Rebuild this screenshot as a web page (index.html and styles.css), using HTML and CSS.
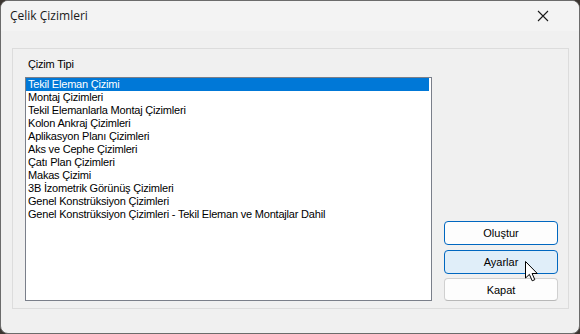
FILE: index.html
```html
<!DOCTYPE html>
<html lang="tr">

<head>
    <meta charset="UTF-8">
    <title>Çelik Çizimleri</title>
    <link rel="stylesheet" href="styles.css">
</head>

<body>
    <div class="window">
        <div class="titlebar">
            <span class="title">Çelik Çizimleri</span>
            <svg class="close" width="12" height="12" viewBox="0 0 12 12">
                <path d="M1 1 L11 11 M11 1 L1 11" stroke="#1a1a1a" stroke-width="1.1" fill="none" />
            </svg>
        </div>
        <div class="content">
            <div class="group">
                <div class="group-label">Çizim Tipi</div>
                <div class="group-row">
                    <ul class="listbox">
                        <li class="selected">Tekil Eleman Çizimi</li>
                        <li>Montaj Çizimleri</li>
                        <li>Tekil Elemanlarla Montaj Çizimleri</li>
                        <li>Kolon Ankraj Çizimleri</li>
                        <li>Aplikasyon Planı Çizimleri</li>
                        <li>Aks ve Cephe Çizimleri</li>
                        <li>Çatı Plan Çizimleri</li>
                        <li>Makas Çizimi</li>
                        <li>3B İzometrik Görünüş Çizimleri</li>
                        <li>Genel Konstrüksiyon Çizimleri</li>
                        <li>Genel Konstrüksiyon Çizimleri - Tekil Eleman ve Montajlar Dahil</li>
                    </ul>
                    <div class="buttons">
                        <button class="btn btn-default">Oluştur</button>
                        <button class="btn btn-hover">Ayarlar</button>
                        <button class="btn btn-plain">Kapat</button>
                    </div>
                </div>
            </div>
        </div>
        <!-- mouse pointer over Ayarlar -->
        <svg class="cursor" width="14" height="21" viewBox="0 0 14 21">
            <path d="M0.5 0.5 L0.5 17 L4.4 13.4 L7.2 19.8 L9.8 18.7 L7.1 12.5 L12.3 12.5 Z" fill="#fff" stroke="#000" stroke-width="1" stroke-linejoin="round" />
        </svg>
    </div>
</body>

</html>
```

FILE: styles.css
```css
html,
body {
    margin: 0;
    padding: 0;
    background-color: #3b3530;
}

.window {
    position: relative;
    width: 578px;
    height: 332px;
    border: 1px solid #6b6b6b;
    border-radius: 8px;
    background-color: #f0f0f0;
    overflow: hidden;
    display: flex;
    flex-direction: column;
    font-family: "Liberation Sans", Arial, sans-serif;
    font-size: 11px;
    letter-spacing: -0.2px;
    color: #000;
}

.titlebar {
    height: 30px;
    background-color: #f3f3f3;
    display: flex;
    align-items: center;
    justify-content: space-between;
    padding: 0 30px 0 9px;
}

.title {
    font-family: "Open Sans", "Noto Sans", sans-serif;
    font-size: 12px;
    letter-spacing: 0;
    color: #1a1a1a;
    margin-top: -1px;
}

.close {
    display: block;
}

.content {
    flex: 1;
    padding: 17px 10px 24px 11px;
    display: flex;
}

.group {
    flex: 1;
    border: 1px solid #dcdcdc;
    padding: 9px 10px 7px 12px;
    display: flex;
    flex-direction: column;
}

.group-label {
    height: 13px;
    line-height: 13px;
    padding-left: 3px;
    margin-bottom: 6px;
}

.group-row {
    flex: 1;
    display: flex;
    gap: 12px;
}

.listbox {
    list-style: none;
    margin: 0;
    padding: 0 2px 0 0;
    width: 403px;
    background-color: #fff;
    border: 1px solid #7a7f8a;
}

.listbox li {
    height: 13px;
    line-height: 13px;
    padding-left: 2px;
    white-space: nowrap;
}

.listbox li.selected {
    background-color: #0078d7;
    color: #fff;
}

.buttons {
    flex: 1;
    display: flex;
    flex-direction: column;
    justify-content: flex-end;
}

.btn {
    font-family: "Liberation Sans", Arial, sans-serif;
    font-size: 11px;
    letter-spacing: 0;
    color: #000;
    height: 24px;
    border-radius: 4px;
    padding: 0;
    margin: 0;
}

.btn-default {
    background-color: #fdfdfd;
    border: 1px solid #0067c0;
    margin-bottom: 5px;
}

.btn-hover {
    background-color: #e0eef9;
    border: 1px solid #0067c0;
    margin-bottom: 4px;
}

.btn-plain {
    height: 23px;
    background-color: #fdfdfd;
    border: 1px solid #d0d0d0;
    border-bottom-color: #b8b8b8;
}

.cursor {
    position: absolute;
    left: 524px;
    top: 260px;
}
```
